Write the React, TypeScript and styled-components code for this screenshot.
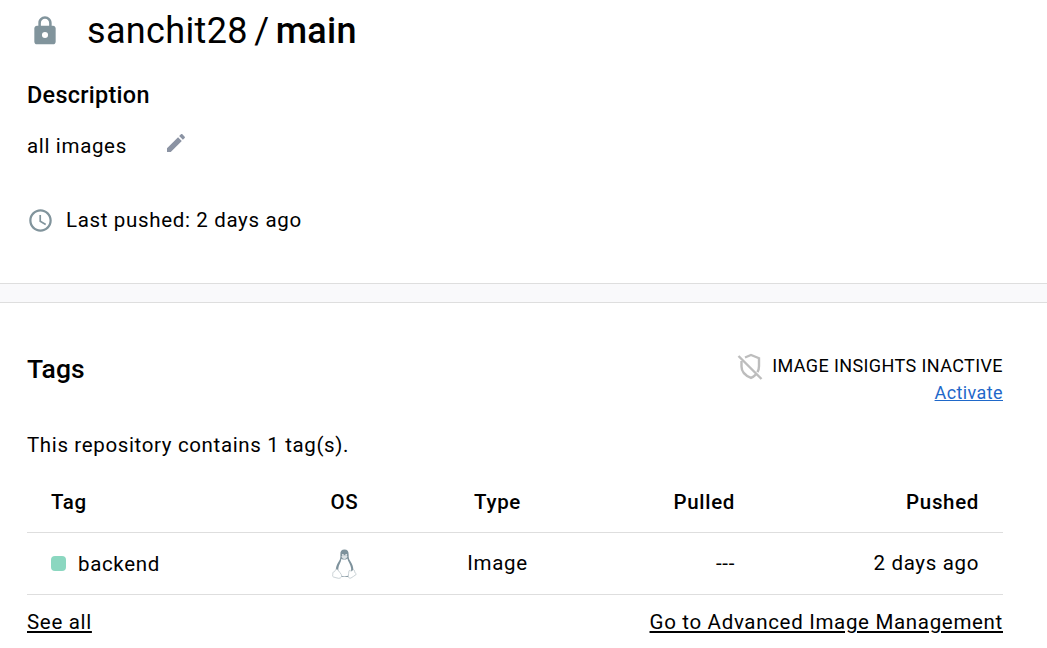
import React from 'react';
import styled, { createGlobalStyle } from 'styled-components';

const Global = createGlobalStyle`
  * { box-sizing: border-box; }
  body {
    margin: 0;
    background: #fff;
    color: #000;
    font-family: Roboto, 'Liberation Sans', sans-serif;
    font-size: 20.5px;
    font-weight: 400;
    letter-spacing: 0.66px;
  }
`;

const Page = styled.main`
  display: flex;
  flex-direction: column;
  height: 648px;
  overflow: hidden;
`;

const Summary = styled.section`
  height: 283px;
  padding: 10px 27px 0;
`;

const TitleRow = styled.header`
  display: flex;
  align-items: center;
  height: 42px;
  padding-left: 2px;
`;

const Title = styled.h1`
  margin: 0 0 0 26px;
  font-size: 36px;
  line-height: 42px;
  font-weight: 400;
  letter-spacing: 0.35px;
  word-spacing: -3px;
  white-space: pre;
`;

const Strong = styled.span`
  font-weight: 500;
`;

const Heading = styled.h2<{ $size: number }>`
  margin: 0;
  font-size: ${(p) => p.$size}px;
  font-weight: 500;
  line-height: 34px;
  letter-spacing: 0.1px;
`;

const DescriptionHeading = styled(Heading)`
  margin-top: 26px;
  letter-spacing: 0.3px;
`;

const Line = styled.div<{ $top: number; $gap: number }>`
  display: flex;
  align-items: center;
  height: 28px;
  margin-top: ${(p) => p.$top}px;
  gap: ${(p) => p.$gap}px;
`;

const EditIcon = styled.svg`
  margin-bottom: 6px;
`;

const Divider = styled.div`
  height: 20px;
  background: #f9f9fb;
  border: solid #dedede;
  border-width: 1px 0;
`;

const Tags = styled.section`
  padding: 49px 44px 0 27px;
`;

const TagsHeader = styled.header`
  display: flex;
  justify-content: space-between;
  height: 79px;
`;

const Insights = styled.div`
  display: flex;
  flex-direction: column;
  align-items: flex-end;
  font-size: 18px;
  line-height: 27px;
  letter-spacing: 0.4px;
`;

const InsightStatus = styled.div`
  display: flex;
  align-items: center;
  gap: 9px;
  height: 27px;
`;

const Link = styled.a<{ $color?: string }>`
  color: ${(p) => p.$color ?? '#000'};
  text-decoration: underline;
`;

const Count = styled.p`
  margin: 0;
  line-height: 28px;
  letter-spacing: 0.64px;
`;

const Table = styled.div`
  margin-top: 12px;
`;

const Row = styled.div<{ $head?: boolean }>`
  display: grid;
  grid-template-columns: 241px 105px 201px 137px 1fr;
  align-items: center;
  height: 62px;
  padding: 0 24px;
  border-bottom: 1px solid #dedede;
  font-weight: ${(p) => (p.$head ? 500 : 400)};
`;

const Cell = styled.div<{ $align?: string; $raised?: boolean }>`
  display: flex;
  align-items: center;
  justify-content: ${(p) => p.$align ?? 'flex-start'};
  padding-bottom: ${(p) => (p.$raised ? 2 : 0)}px;
`;

const Status = styled.span`
  width: 15px;
  height: 15px;
  margin-right: 12px;
  border-radius: 4px;
  background: #8bd7c0;
`;

const Footer = styled.footer`
  display: flex;
  justify-content: space-between;
  padding-top: 13px;
  line-height: 28px;
  letter-spacing: 0.68px;
`;

const Penguin = () => (
  <svg width="25" height="32" viewBox="0 0 26 32">
    <path d="M13 1c-3 0-4.500 1.800-4.300 5 .1 3 .2 4.500-1.700 7.300C5 16.500 3.800 19 4 23l4 6.500h10L22.200 23c.2-4-1.200-7-3.200-10-1.600-2.400-1.700-4-1.700-7C17.300 2.800 16 1 13 1z" fill="#7e929c" />
    <path d="M9.800 10.500c1.500 1.300 4.700 1.300 6.200-.3.500 3.200 3.500 6 3.900 10.500.1 2-.4 4.300-1.900 7.100-2.700 1.500-6.500 1.500-9.300.2C7 25 6.300 23 6.600 20.500c.4-4 2.900-6.500 3.200-10z" fill="#fff" />
    <path d="M9.800 8c1.700-1.300 4.200-1.500 6.300-.1-.3 1.700-1.600 2.800-3.200 2.800S10.100 9.600 9.800 8z" fill="#dce2e5" />
    <circle cx="11.300" cy="6.500" r="1" fill="#e9edef" />
    <circle cx="14.800" cy="6.500" r="1" fill="#e9edef" />
    <path d="M4.500 21.500c1.500-.2 3 2.400 5.200 5.500 1 1.800-.2 4-2.700 3.900-1.700-.1-3.900-1-5.700-1.500-1.200-.5-.3-2-.5-3.500.1-1.500.6-1.600 1.700-1.900.8-.5.900-2.300 2-2.500zM17.700 23c1-.8 1.300.5 2.700.3 1-.2 1.200-1.600 2.200-1.300 1.100.5.700 1.800 1.300 2.900.6.900 1.500 1.100 1.200 2-1.500 1.200-3.600 2.600-5.400 3.700-1.500.5-2.700-.3-2.800-1.700 0-1.800.6-3.900.8-5.900z" fill="#fff" stroke="#b9c3c8" strokeWidth="0.8" />
  </svg>
);

const InsightsOff = () => (
  <svg width="26" height="28" viewBox="0 -1 26 28" fill="none" stroke="#bdbdbd" strokeWidth="2.400">
    <path d="M8 4.500 14 2l8 3.200v8c0 2.200-.5 4.200-1.600 6" />
    <path d="M4.500 8v5.500c0 5.200 3.800 9.100 9.500 11.400 2-.8 3.500-2 5-3.500" />
    <path d="M1.500 3 24.500 26" />
  </svg>
);

export default function App() {
  return (
    <Page>
      <Global />
      <Summary>
        <TitleRow>
          <svg width="32" height="32" viewBox="0 0 24 24" fill="#81949c">
            <path d="M18 8h-1V6c0-2.760-2.240-5-5-5S7 3.240 7 6v2H6c-1.100 0-2 .9-2 2v10c0 1.100.9 2 2 2h12c1.100 0 2-.9 2-2V10c0-1.100-.9-2-2-2zm-2.900 0H8.900V6c0-1.710 1.390-3.100 3.100-3.100s3.100 1.390 3.100 3.100v2z" />
            <circle cx="12" cy="15" r="2.300" fill="#fff" />
          </svg>
          <Title>
            sanchit28 / <Strong>main</Strong>
          </Title>
        </TitleRow>
        <DescriptionHeading $size={23.4}>Description</DescriptionHeading>
        <Line $top={20} $gap={37}>
          all images
          <EditIcon width="24" height="24" viewBox="0 0 24 24" fill="#8b93a3">
            <path d="M3 17.250V21h3.750L17.810 9.940l-3.750-3.750L3 17.250zM20.710 7.040c.39-.39.39-1.020 0-1.410l-2.340-2.340c-.39-.39-1.020-.39-1.410 0l-1.830 1.830 3.750 3.750 1.830-1.830z" />
          </EditIcon>
        </Line>
        <Line $top={46} $gap={12}>
          <svg width="27" height="27" viewBox="0 0 24 24" fill="#81949c">
            <path d="M11.990 2C6.470 2 2 6.480 2 12s4.470 10 9.990 10C17.520 22 22 17.520 22 12S17.520 2 11.990 2zM12 20c-4.420 0-8-3.580-8-8s3.580-8 8-8 8 3.580 8 8-3.580 8-8 8zm.5-13H11v6l5.250 3.150.75-1.230-4.500-2.670z" />
          </svg>
          Last pushed: 2 days ago
        </Line>
      </Summary>
      <Divider />
      <Tags>
        <TagsHeader>
          <Heading $size={26.5}>Tags</Heading>
          <Insights>
            <InsightStatus>
              <InsightsOff />
              IMAGE INSIGHTS INACTIVE
            </InsightStatus>
            <Link $color="#1f68c9">Activate</Link>
          </Insights>
        </TagsHeader>
        <Count>This repository contains 1 tag(s).</Count>
        <Table>
          <Row $head>
            <Cell>Tag</Cell>
            <Cell $align="center">OS</Cell>
            <Cell $align="center">Type</Cell>
            <Cell $align="flex-end">Pulled</Cell>
            <Cell $align="flex-end">Pushed</Cell>
          </Row>
          <Row>
            <Cell>
              <Status />
              backend
            </Cell>
            <Cell $align="center">
              <Penguin />
            </Cell>
            <Cell $align="center" $raised>
              Image
            </Cell>
            <Cell $align="flex-end" $raised>
              ---
            </Cell>
            <Cell $align="flex-end" $raised>
              2 days ago
            </Cell>
          </Row>
        </Table>
        <Footer>
          <Link>See all</Link>
          <Link>Go to Advanced Image Management</Link>
        </Footer>
      </Tags>
    </Page>
  );
}
